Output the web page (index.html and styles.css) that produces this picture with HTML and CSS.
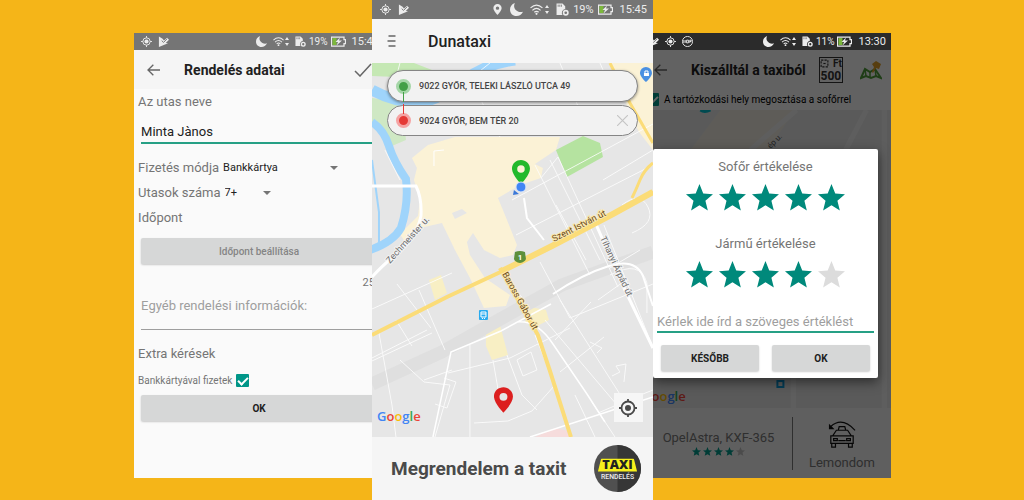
FILE: index.html
```html
<!DOCTYPE html>
<html lang="hu">
<head>
  <meta charset="UTF-8">
  <meta name="viewport" content="width=device-width, initial-scale=1.0">
  <title>Dunataxi</title>
  <link rel="stylesheet" href="styles.css">
</head>
<body>
  <svg class="sprite" aria-hidden="true">
    <symbol id="i-gps" viewBox="0 0 24 24"><circle cx="12" cy="12" r="4.500" fill="currentColor"/><circle cx="12" cy="12" r="8" fill="none" stroke="currentColor" stroke-width="2"/><path d="M12 0v4M12 20v4M0 12h4M20 12h4" stroke="currentColor" stroke-width="2"/></symbol>
    <symbol id="i-play" viewBox="0 0 24 24"><path d="M2 1l8 5 3 4 7-6 4 4-7 7 5 1L2 24z" fill="currentColor"/><path d="M8 10l4 4 8-8" fill="none" stroke="#757575" stroke-width="2"/></symbol>
    <symbol id="i-pin" viewBox="0 0 24 32"><path fill-rule="evenodd" d="M12 0C5.400 0 0 5 0 11.500 0 20 12 32 12 32s12-12 12-20.500C24 5 18.600 0 12 0zm0 7a5 5 0 1 1 0 10 5 5 0 0 1 0-10z" fill="currentColor"/></symbol>
    <symbol id="i-moon" viewBox="0 0 24 24"><path d="M9 0C3 2 0 7 0 12c0 7 5 12 12 12 5 0 10-3 12-8-3 1-7 1-10-1C8 12 6 6 9 0z" fill="currentColor"/></symbol>
    <symbol id="i-wifi" viewBox="0 0 24 20"><path d="M1 7q11-10 22 0M4.500 11.500q7.500-7 15 0M8 15q4-3.500 8 0" fill="none" stroke="currentColor" stroke-width="2.200"/><circle cx="12" cy="18" r="2" fill="currentColor"/></symbol>
    <symbol id="i-updown" viewBox="0 0 8 20"><path d="M4 1l4 6H0zM4 19l4-6H0z" fill="currentColor"/></symbol>
    <symbol id="i-sim" viewBox="0 0 24 24"><path d="M1 1h11l5 5v5a7 7 0 0 0-5 11H1z" fill="currentColor"/><path d="M4 3v4M7 3v4M10 3v4" stroke="#757575" stroke-width="1.500"/><circle cx="18" cy="18" r="4" fill="none" stroke="currentColor" stroke-width="3"/></symbol>
    <symbol id="i-battery" viewBox="0 0 30 20"><path d="M1 1h25v5h3v8h-3v5H1z" fill="none" stroke="currentColor" stroke-width="2.500"/><path d="M3 3h8v14H3z" fill="#7cb83c"/><path d="M18 2l-9 9h5l-3 7 11-10h-6z" fill="currentColor"/></symbol>
    <symbol id="i-back" viewBox="0 0 24 24"><path d="M11 4l-8 8 8 8M3 12h18" fill="none" stroke="currentColor" stroke-width="2"/></symbol>
    <symbol id="i-star" viewBox="0 0 24 24"><path d="M12 0l3.400 8.400L24 9.100l-6.700 5.800 2.100 8.600L12 19l-7.400 4.500 2.100-8.600L0 9.100l8.600-.7z" fill="currentColor"/></symbol>
  </svg>

  <main class="stage">

    <!-- order details -->
    <section class="phone phone-side">
      <div class="screen">
        <div class="status">
          <svg class="ic"><use href="#i-gps"/></svg>
          <svg class="ic"><use href="#i-play"/></svg>
          <span class="space"></span>
          <svg class="ic moon"><use href="#i-moon"/></svg>
          <svg class="ic moon"><use href="#i-wifi"/></svg>
          <svg class="ic thin"><use href="#i-updown"/></svg>
          <svg class="ic moon"><use href="#i-sim"/></svg>
          <span>19%</span>
          <svg class="ic wide"><use href="#i-battery"/></svg>
          <span class="time">15:45</span>
        </div>
        <header class="bar">
          <button class="icon-btn" aria-label="Vissza"><svg class="ic-back"><use href="#i-back"/></svg></button>
          <h2>Rendelés adatai</h2>
          <button class="icon-btn check-btn" aria-label="Kész"><svg viewBox="0 0 18 14"><path d="M1 8l5 5L17 1" fill="none" stroke="currentColor" stroke-width="1.500"/></svg></button>
        </header>
        <form class="order">
          <label class="caption" for="name">Az utas neve</label>
          <input class="line-input" type="text" id="name" value="Minta Jànos">
          <div class="row">
            <label for="pay">Fizetés módja</label>
            <span class="select pay"><select id="pay"><option>Bankkártya</option></select></span>
          </div>
          <div class="row">
            <label for="count">Utasok száma</label>
            <span class="select count"><select id="count"><option>7+</option></select></span>
          </div>
          <div class="row">Időpont</div>
          <button type="button" class="btn muted">Időpont beállítása</button>
          <span class="counter">25</span>
          <input class="line-input info" type="text" placeholder="Egyéb rendelési információk:" aria-label="Egyéb rendelési információk">
          <div class="row extra">Extra kérések</div>
          <div class="row small">
            <label for="card">Bankkártyával fizetek</label>
            <input type="checkbox" id="card" checked>
          </div>
          <button type="button" class="btn">OK</button>
        </form>
      </div>
    </section>

    <!-- map -->
    <section class="phone phone-main">
      <div class="status">
        <svg class="ic"><use href="#i-gps"/></svg>
        <svg class="ic"><use href="#i-play"/></svg>
        <span class="space"></span>
        <svg class="ic"><use href="#i-pin"/></svg>
        <svg class="ic moon"><use href="#i-moon"/></svg>
        <svg class="ic moon"><use href="#i-wifi"/></svg>
        <svg class="ic thin"><use href="#i-updown"/></svg>
        <svg class="ic moon"><use href="#i-sim"/></svg>
        <span>19%</span>
        <svg class="ic wide"><use href="#i-battery"/></svg>
        <span class="time">15:45</span>
      </div>
      <header class="bar">
        <button class="icon-btn" aria-label="Menü"><svg class="ic-menu" viewBox="0 0 9 12"><path d="M1 1h7M0 6h8M1 11h7" stroke="currentColor" stroke-width="1.600"/></svg></button>
        <h1>Dunataxi</h1>
      </header>
      <div class="map">
        <svg class="map-art" viewBox="372 63 281 374" preserveAspectRatio="xMidYMid slice">
          <rect x="372" y="63" width="281" height="374" fill="#e6e6e6"/>
          <!-- parks -->
          <g fill="#b5e3a0">
            <path d="M372 63h42l18 7-10 8-50-2z" fill="#c5e8b4"/>
            <path d="M372 98l30 4 4 38-14 6-8-16-12-8z" fill="#cfe8c4"/>
            <path d="M556 150l27-14 17 7 3 14-36 20z"/>
          </g>
          <!-- built-up area -->
          <g fill="#fbf2d6">
            <path d="M412 158L428 145 455 137H560L556 150 535 164 543 168 541 178 520 185 498 198 505 215 517 245 513 255 500 258 484 250 473 233 467 242 470 255 485 278 510 295 506 306 484 308 470 278 455 250 442 223 420 228 405 242 400 234 418 216 420 200 414 180 417 168Z"/>
            <path d="M610 63h43v87l-14-18-18-40z"/>
            <path d="M429 280l12-5 6 18-12 7zM530 307l16 3 3 10-12 6-12-4zM486 330l14-5 8 30-16 5-6-14z" fill="#f8efc4"/>
          </g>
          <path d="M452 213l10-4 5 4-12 6z" fill="#e6e6e6"/>
          <path d="M434 166v-15l10-1" fill="none" stroke="#fff"/>
          <path d="M372 384l70-32 62-35 58-32 91-33" fill="none" stroke="#dfdfdf" stroke-width="13"/>
          <path d="M535 437l20-9 14 3 2 6z" fill="#f6dcdc"/>
          <!-- river -->
          <g fill="none" stroke="#9fd4fb">
            <path d="M515 60q-30 4-50 20t-40 22q-28 2-53-12" stroke-width="11"/>
            <path d="M372 122q12 8 17 24t17 33q3 24-5 49-8 14-31 22" stroke-width="8"/>
            <path d="M372 160q4 30 7 52v34" stroke-width="2"/>
          </g>
          <!-- streets -->
          <g fill="none" stroke="#fff" stroke-width="1" opacity=".8">
            <path d="M400 63l-8 30M490 63l-20 16 30 58M600 63l16 36M560 63l30 72M653 150l-50 30M512 200l141-76M516 235l137-70M541 178l17-21 60 130M535 165l55 110M550 160l50 100M556 205l30 55"/>
            <path d="M397 284l34 44M372 309l80-36M372 358l55-28M396 320l16 26M419 290l26 60M385 150l15 30M508 285l14 12M540 262l30 56 83-34M560 300l70 110M604 225l48 120"/>
            <path d="M372 361l60-28M379 333l13 72 4 32M400 360l24 22 26 3-15 52M448 373l62-15 60-30M470 345v92M424 380l28-10M444 378l12 4-9 26-12-4M493 360l9 52M507 355l15 40 15 15M517 360l14-8 6 18-14 6zM535 335l20 50-23 26-24 10-34 2M545 320l78 92M555 340l36-38M560 372l44-35M598 300l28-20M626 290l-12-36M640 250l-30 18M575 395l20 42M592 402l23 35"/>
            <path d="M590 342l12 6-5 5M612 376l8-4-4-6 10-2-2 18M653 390l-20 8-35 15"/>
            <path d="M622 205q18-14 26 2t-16 26M610 275q30-16 37 8v30"/>
          </g>
          <g fill="none" stroke="#fff" stroke-width="2">
            <path d="M372 186h44q6 12 5 30-5 24-26 39-14 12-23 22" stroke-width="3"/>
            <path d="M524 198l3 20 17 22"/>
            <path d="M595 222l30 68 28 58" stroke-width="3"/>
            <path d="M433 437l18-85 50-21 50-27M530 437l123-40M517 322q20-2 36 22l34 50 18 28" stroke-width="1.500"/>
            <path d="M553 294q30-20 56-28t34 10l10 30" stroke-width="2"/>
          </g>
          <!-- main roads -->
          <g fill="none" stroke="#fbdc78">
            <path d="M372 335l75-38 60-28 40-20 70-37 36-20" stroke-width="4"/>
            <path d="M500 268l38 67 12 36 21 66" stroke-width="4"/>
            <path d="M632 198q4-8 8-18t13-17M610 63l20 40 23 40" stroke-width="3"/>
            <path d="M500 272l52-26 61-32 40-22" stroke-width="6"/>
          </g>
          <g class="streets">
            <text transform="translate(390 264) rotate(-48)">Zechmeister u.</text>
            <text transform="translate(554 242) rotate(-27)" class="major">Szent István út</text>
            <text transform="translate(502 274) rotate(61)" class="major">Baross Gábor út</text>
            <text transform="translate(600 238) rotate(65)">Tihanyi Árpád út</text>
          </g>
          <path d="M515 252q5-2 10 0l1 7q-1 3-6 4-5-1-6-4z" fill="#5c8f3a"/>
          <text x="520" y="260" class="shield">1</text>
          <g><rect x="479" y="310" width="9" height="10" rx="1" fill="#29abef"/><path d="M481 312h5v5h-5zM482 319l1-1M485 319l-1-1" fill="none" stroke="#fff"/><path d="M481 314h5" stroke="#fff"/></g>
          <!-- car park pin -->
          <path d="M646 67a6 6 0 0 0-6 6c0 4 6 9 6 9s6-5 6-9a6 6 0 0 0-6-6z" fill="#4a90e2"/>
          <path d="M644 73h5v3h-5z" fill="#fff"/><path d="M645 73v-2h3v2" fill="none" stroke="#fff"/>
          <!-- pick-up, own position, destination -->
          <use href="#i-pin" x="512" y="160" width="18" height="24" color="#22b92c"/>
          <circle cx="521" cy="187" r="5" fill="#4285f4" stroke="#dbe7fb" stroke-width="1"/>
          <path d="M514 190l5 4-6 1z" fill="#3b78d8"/>
          <use href="#i-pin" x="494" y="386" width="19" height="28" color="#dc1f1f"/>
        </svg>
        <div class="addresses">
          <label class="address from"><i class="dot"></i><input type="text" value="9022 GYŐR, TELEKI LÁSZLÓ UTCA 49" aria-label="Honnan"></label>
          <label class="address to"><i class="dot"></i><input type="text" value="9024 GYŐR, BEM TÉR 20" aria-label="Hova">
            <button class="clear" aria-label="Törlés"><svg viewBox="0 0 10 10"><path d="M0 0l10 10M10 0L0 10" stroke="currentColor"/></svg></button>
          </label>
        </div>
        <div class="map-foot">
          <span class="google"><b class="b">G</b><b class="r">o</b><b class="y">o</b><b class="b">g</b><b class="g">l</b><b class="r">e</b></span>
          <button class="locate" aria-label="Saját helyzet"><svg viewBox="0 0 18 18"><circle cx="9" cy="9" r="6.500" fill="none" stroke="currentColor" stroke-width="1.800"/><circle cx="9" cy="9" r="3" fill="currentColor"/><path d="M9 0v3M9 15v3M0 9h3M15 9h3" stroke="currentColor" stroke-width="1.800"/></svg></button>
        </div>
      </div>
      <button class="order-btn">
        <span>Megrendelem a taxit</span>
        <svg class="logo" viewBox="0 0 48 48">
          <circle cx="24" cy="24" r="24" fill="#505050"/>
          <path d="M24 0a24 24 0 0 1 0 48z" fill="#363636"/>
          <path d="M8 14h32q1 0 1 1l3 12H4l3-12q0-1 1-1z" fill="#f7f01c"/>
          <text x="24" y="25" class="logo-taxi">TAXI</text>
          <text x="24" y="35" class="logo-sub">RENDELÉS</text>
        </svg>
      </button>
    </section>

    <!-- rating -->
    <section class="phone phone-side phone-right">
      <div class="screen">
        <div class="status dark">
          <svg class="ic"><use href="#i-play"/></svg>
          <svg class="ic"><use href="#i-gps"/></svg>
          <svg class="ic stop" viewBox="0 0 24 24"><circle cx="12" cy="12" r="11" fill="none" stroke="currentColor" stroke-width="2"/><path d="M4 9v6M7 9v6M10 9h4v6h-4zM17 15V9h3v3h-3" fill="none" stroke="currentColor" stroke-width="2"/></svg>
          <span class="space"></span>
          <svg class="ic moon"><use href="#i-moon"/></svg>
          <svg class="ic moon"><use href="#i-wifi"/></svg>
          <svg class="ic thin"><use href="#i-updown"/></svg>
          <svg class="ic moon"><use href="#i-sim"/></svg>
          <span>11%</span>
          <svg class="ic wide"><use href="#i-battery"/></svg>
          <span class="time">13:30</span>
        </div>
        <div class="trip">
          <header class="bar">
            <button class="icon-btn" aria-label="Vissza"><svg class="ic-back"><use href="#i-back"/></svg></button>
            <h2>Kiszálltál a taxiból</h2>
            <span class="coupon">
              <span class="coupon-top"><svg viewBox="0 0 8 8"><path d="M1 1h6v6H1z" fill="none" stroke="currentColor" stroke-dasharray="2 1"/><path d="M3 4h2" stroke="currentColor"/></svg>Ft</span>
              <span>500</span>
            </span>
            <svg class="ic-map" viewBox="0 0 22 20"><path d="M1 18L5 9l5 3 5-3 6 9-5-2-5 2-5-2z" fill="none" stroke="#4e9a3a" stroke-width="2"/><path d="M10 12v6M15 9l1 7M5 9l1 7" stroke="#4e9a3a" stroke-width="1.500"/><path d="M12 12l2-5-2-3 4-3 5 3-2 5-3-1-3 5z" fill="#d99a26"/></svg>
          </header>
          <label class="share"><input type="checkbox" checked> A tartózkodási hely megosztása a sofőrrel</label>
          <div class="trip-map">
            <svg viewBox="640 110 251 298" preserveAspectRatio="xMidYMid slice" aria-hidden="true">
              <rect x="640" y="110" width="251" height="298" fill="#e2e2e2"/>
              <path d="M700 110q4 3 10 0" stroke="#00b8c8" stroke-width="3" fill="none"/>
              <path d="M690 150l30-40h75l-28 40z" fill="#eae6dc"/>
              <path d="M750 150l46-40M840 160l26-50M793 378v30M884 110v298" stroke="#ececec" stroke-width="5" fill="none"/>
              <text transform="translate(770 149) rotate(-45)" class="street-small">ép u.</text>
              <path d="M777 381h6v6h-6z" fill="none" stroke="#0a9ad8" stroke-width="2"/>
            </svg>
            <span class="google"><b class="b">G</b><b class="r">o</b><b class="y">o</b><b class="b">g</b><b class="g">l</b><b class="r">e</b></span>
          </div>
          <footer class="trip-foot">
            <div class="car">
              <span>OpelAstra, KXF-365</span>
              <span class="mini-stars"><svg><use href="#i-star"/></svg><svg><use href="#i-star"/></svg><svg><use href="#i-star"/></svg><svg><use href="#i-star"/></svg><svg class="off"><use href="#i-star"/></svg></span>
            </div>
            <button class="cancel">
              <svg viewBox="0 0 30 30"><g fill="none" stroke="currentColor" stroke-width="1.300"><path d="M5 17l4-6h12l4 6M3 17h24v8H3zM11 11l1-4h6l1 4M4 25v4h4v-4M22 25v4h4v-4M11 22h8M6 20h4v2H6zM20 20h4v2h-4z"/><path d="M3 7q12-11 26 4" stroke-width="1.200"/></g><path d="M1 4v6h6z" fill="currentColor"/></svg>
              <span>Lemondom</span>
            </button>
          </footer>
        </div>
        <form class="dialog">
          <fieldset>
            <legend>Sofőr értékelése</legend>
            <div class="stars">
              <input type="radio" name="driver" aria-label="1 csillag"><input type="radio" name="driver" aria-label="2 csillag"><input type="radio" name="driver" aria-label="3 csillag"><input type="radio" name="driver" aria-label="4 csillag"><input type="radio" name="driver" aria-label="5 csillag" checked>
            </div>
          </fieldset>
          <fieldset>
            <legend>Jármű értékelése</legend>
            <div class="stars">
              <input type="radio" name="vehicle" aria-label="1 csillag"><input type="radio" name="vehicle" aria-label="2 csillag"><input type="radio" name="vehicle" aria-label="3 csillag"><input type="radio" name="vehicle" aria-label="4 csillag" checked><input type="radio" name="vehicle" aria-label="5 csillag">
            </div>
          </fieldset>
          <input class="line-input" type="text" placeholder="Kérlek ide írd a szöveges értéklést" aria-label="Szöveges értékelés">
          <div class="actions">
            <button type="button" class="btn">KÉSŐBB</button>
            <button type="button" class="btn">OK</button>
          </div>
        </form>
      </div>
    </section>

  </main>
</body>
</html>
```

FILE: styles.css
```css
* {
  box-sizing: border-box;
}

body {
  margin: 0;
  background: #f5b518;
  font-family: Roboto, sans-serif;
  font-size: 13px;
  color: #757575;
}

button, input, select {
  font-family: inherit;
  color: inherit;
  margin: 0;
}

button {
  border: 0;
  padding: 0;
  background: none;
  cursor: pointer;
}

h1, h2 {
  margin: 0;
  color: #212121;
  font-weight: 500;
  white-space: nowrap;
}

h1 {
  font-size: 16px;
}

h2 {
  font-size: 14px;
  font-weight: 700;
}

.sprite {
  display: none;
}

.stage {
  display: grid;
  grid-template-columns: 238fr 281fr 238fr;
  align-items: center;
  min-height: 100vh;
  padding: 0 13% 0 calc(13% + 1px);
}

.phone {
  min-width: 0;
  overflow: hidden;
  background: #fafafa;
}

.phone-side {
  margin-top: 11px;
}

.phone-side .screen {
  position: relative;
  width: 105%;
  min-height: 445px;
}

.phone-right {
  display: flex;
  justify-content: flex-end;
}

.phone-right .screen {
  flex: none;
  display: flex;
  flex-direction: column;
}

.phone-main {
  display: flex;
  flex-direction: column;
  align-self: stretch;
  background: #f5f5f5;
}

/* status bar */

.status {
  display: flex;
  align-items: center;
  gap: 3px;
  height: 17px;
  padding: 0 5px 0 7px;
  background: #757575;
  color: #ececec;
  font-size: 11px;
}

.phone-main .status {
  height: 19px;
  padding: 0 6px 0 8px;
  gap: 4px;
}

.status.dark {
  background: #2b2b2b;
}

.space {
  flex: 1;
}

.time {
  margin-left: 3px;
}

.phone-side .status {
  font-size: 10px;
}

.phone-side .time {
  font-size: 11px;
}

.phone-side .ic.moon {
  width: 11px;
  height: 11px;
}

.ic {
  width: 11px;
  height: 11px;
  flex: none;
}

.ic + .ic {
  margin-left: 3px;
}

.ic.moon {
  width: 13px;
  height: 13px;
}

.ic.thin {
  width: 4px;
  margin-left: -2px;
}

.ic.wide {
  width: 15px;
}

/* title bar */

.bar {
  display: flex;
  align-items: center;
  height: 39px;
  padding: 0 12px;
  background: #f5f5f5;
}

.phone-main .bar {
  height: 44px;
}

.icon-btn {
  display: flex;
  width: 38px;
  color: #666;
}

.phone-main .icon-btn {
  width: 44px;
}

.ic-back {
  width: 16px;
  height: 16px;
}

.ic-menu {
  width: 10px;
  height: 12px;
  margin-left: 3px;
}

.check-btn {
  width: 18px;
  margin-left: auto;
}

/* order form */

.order {
  display: flex;
  flex-direction: column;
  padding: 0 4px;
}

.caption {
  line-height: 26px;
}

.line-input {
  height: 24px;
  margin: 5px 3px 11px;
  padding: 0;
  border: 0;
  border-bottom: 2px solid #26a085;
  background: none;
  color: #212121;
  font-size: 13px;
}

.line-input::placeholder {
  color: #9e9e9e;
  opacity: 1;
}

.row {
  display: flex;
  align-items: center;
  gap: 4px;
  height: 25px;
}

.select {
  display: flex;
  align-items: center;
}

.select.pay {
  width: 115px;
}

.select.count {
  width: 46px;
}

.select::after {
  content: "";
  margin-left: -8px;
  border: 4px solid transparent;
  border-top-color: #757575;
  border-bottom: 0;
  pointer-events: none;
}

select {
  appearance: none;
  width: 100%;
  padding: 0;
  border: 0;
  background: none;
  color: #212121;
  font-size: 11px;
}

.btn {
  height: 26px;
  margin: 0 3px;
  border-radius: 2px;
  background: #d6d7d7;
  box-shadow: 0 1px 2px rgba(0, 0, 0, 0.2);
  color: #212121;
  font-size: 10px;
  font-weight: 700;
}

.btn.muted {
  margin-top: 8px;
  color: #858585;
  font-weight: 500;
}

.counter {
  padding: 12px 5px 0 0;
  font-size: 11px;
  line-height: 14px;
  text-align: right;
}

.line-input.info {
  height: 36px;
  margin: 4px 3px 11px;
  padding-bottom: 12px;
  border-bottom: 1px solid #9e9e9e;
}

.row.small {
  height: 29px;
  font-size: 10px;
}

input[type="checkbox"] {
  display: grid;
  place-items: center;
  appearance: none;
  flex: none;
  width: 13px;
  height: 13px;
  border-radius: 1px;
  background: #009688;
}

input[type="checkbox"]:checked::after {
  content: "";
  width: 4px;
  height: 8px;
  margin-top: -2px;
  border: solid #fff;
  border-width: 0 2px 2px 0;
  transform: rotate(45deg);
}

/* map */

.map {
  position: relative;
  flex: 1;
  display: flex;
  flex-direction: column;
  justify-content: space-between;
  min-height: 374px;
  overflow: hidden;
}

.map-art {
  position: absolute;
  inset: 0;
  width: 100%;
  height: 100%;
}

.streets text {
  font-size: 9px;
  fill: #6b6b6b;
  stroke: #f3f3f3;
  stroke-width: 2px;
  paint-order: stroke;
}

.streets .major {
  fill: #6d4c1d;
  stroke: #fbe9b0;
}

.shield {
  fill: #fff;
  font-size: 8px;
  font-weight: 700;
  text-anchor: middle;
}

.addresses {
  position: relative;
  display: grid;
  gap: 3px;
  padding: 7px 15px;
}

.address {
  display: flex;
  align-items: center;
  height: 31px;
  padding: 0 9px 0 8px;
  border: 1px solid #858585;
  border-radius: 16px;
  background: #f2f2f2;
}

.address.from {
  height: 32px;
  box-shadow: 0 1px 3px rgba(0, 0, 0, 0.4);
}

.address input {
  flex: 1;
  min-width: 0;
  padding: 0;
  border: 0;
  background: none;
  color: #444;
  font-size: 9px;
  font-weight: 500;
}

.dot {
  position: relative;
  width: 15px;
  height: 15px;
  margin-right: 8px;
  border: 3px solid #a5d6a7;
  border-radius: 50%;
  background: #43a047;
}

.to .dot {
  border-color: #f5a3a3;
  background: #e53935;
}

/* line between the two dots */
.dot::after {
  content: "";
  position: absolute;
  left: 4px;
  top: 10px;
  width: 1px;
  height: 10px;
  background: #43a047;
}

.to .dot::after {
  top: -12px;
  background: #e53935;
}

.clear {
  display: flex;
  width: 11px;
  color: #c4c4c4;
}

.clear svg {
  width: 100%;
}

.map-foot {
  position: relative;
  display: flex;
  align-items: flex-end;
  justify-content: space-between;
  padding: 0 10px 15px 5px;
}

.google {
  font-family: "Open Sans", sans-serif;
  font-size: 13px;
  line-height: 12px;
}

.google b {
  font-weight: 600;
}

.b { color: #4285f4; }
.r { color: #ea4335; }
.y { color: #fbbc05; }
.g { color: #34a853; }

.locate {
  display: grid;
  place-items: center;
  width: 29px;
  height: 29px;
  background: #f6f6f6;
  color: #4a4a4a;
}

.locate svg {
  width: 18px;
}

.order-btn {
  display: flex;
  align-items: center;
  justify-content: space-between;
  height: 63px;
  padding: 0 12px 0 19px;
  color: #4a4a4a;
  font-size: 19px;
  font-weight: 700;
}

.logo {
  width: 47px;
  height: 47px;
}

.logo-taxi {
  fill: #222;
  font-family: "Open Sans", sans-serif;
  font-size: 13px;
  font-weight: 800;
  text-anchor: middle;
}

.logo-sub {
  fill: #eee;
  font-size: 7px;
  font-weight: 500;
  text-anchor: middle;
}

/* trip screen behind the dialog */

.trip {
  position: relative;
  flex: 1;
  display: flex;
  flex-direction: column;
}

.trip::after {
  content: "";
  position: absolute;
  inset: 0;
  background: rgba(0, 0, 0, 0.6);
}

.trip .bar {
  padding: 0 9px 0 12px;
}

.coupon {
  display: grid;
  width: 24px;
  margin: 0 17px 0 auto;
  border: 1px solid #333;
  color: #333;
  font-size: 12px;
  font-weight: 700;
  line-height: 12px;
  text-align: center;
}

.coupon-top {
  display: flex;
  align-items: center;
  justify-content: space-between;
  font-size: 10px;
}

.coupon-top svg {
  width: 9px;
  height: 9px;
}

.ic-map {
  width: 22px;
  height: 20px;
}

.share {
  display: flex;
  align-items: center;
  gap: 5px;
  height: 21px;
  padding-left: 5px;
  background: #f5f5f5;
  color: #000;
  font-size: 10px;
  white-space: nowrap;
}

.trip-map {
  position: relative;
  flex: 1;
  display: flex;
  align-items: flex-end;
  padding: 0 0 6px 1px;
}

.trip-map svg {
  position: absolute;
  inset: 0;
  width: 100%;
  height: 100%;
}

.trip-map .google {
  position: relative;
}

.street-small {
  fill: #555;
  font-size: 8px;
}

.trip-foot {
  display: flex;
  height: 70px;
  padding: 9px 0 8px;
  background: #ededed;
}

.car {
  flex: 3;
  display: grid;
  align-content: center;
  justify-items: center;
  gap: 2px;
  padding: 0 0 2px 4px;
  border-right: 1px solid #777;
}

.mini-stars {
  display: flex;
  gap: 2px;
  color: #009688;
}

.mini-stars svg {
  width: 9px;
  height: 9px;
}

.mini-stars .off {
  color: #bbb;
}

.cancel {
  flex: 2;
  display: grid;
  align-content: space-between;
  justify-items: center;
  padding-top: 3px;
  font-size: 13px;
}

.cancel svg {
  width: 28px;
  height: 28px;
  color: #111;
}

/* rating dialog floats over the trip screen */

.dialog {
  position: absolute;
  top: 116px;
  left: 12px;
  right: 13px;
  display: flex;
  flex-direction: column;
  padding: 8px 4px 7px;
  border-radius: 2px;
  background: #fff;
  box-shadow: 0 4px 12px rgba(0, 0, 0, 0.5);
}

fieldset {
  margin: 0 0 23px;
  padding: 0;
  border: 0;
  text-align: center;
}

legend {
  width: 100%;
  padding: 0;
  line-height: 20px;
}

.stars {
  display: flex;
  justify-content: center;
  gap: 6px;
  padding-top: 7px;
}

.stars input {
  appearance: none;
  width: 27px;
  height: 27px;
  background: #00897b;
  clip-path: polygon(50% 0, 64% 35%, 100% 38%, 72% 62%, 81% 98%, 50% 79%, 19% 98%, 28% 62%, 0 38%, 36% 35%);
}

.stars input:checked ~ input {
  background: #dcdcdc;
}

.dialog .line-input {
  height: 22px;
  margin: 0 0 12px;
}

.actions {
  display: flex;
  gap: 13px;
  padding: 0 4px;
}

.actions .btn {
  flex: 1;
  margin: 0;
}
```
